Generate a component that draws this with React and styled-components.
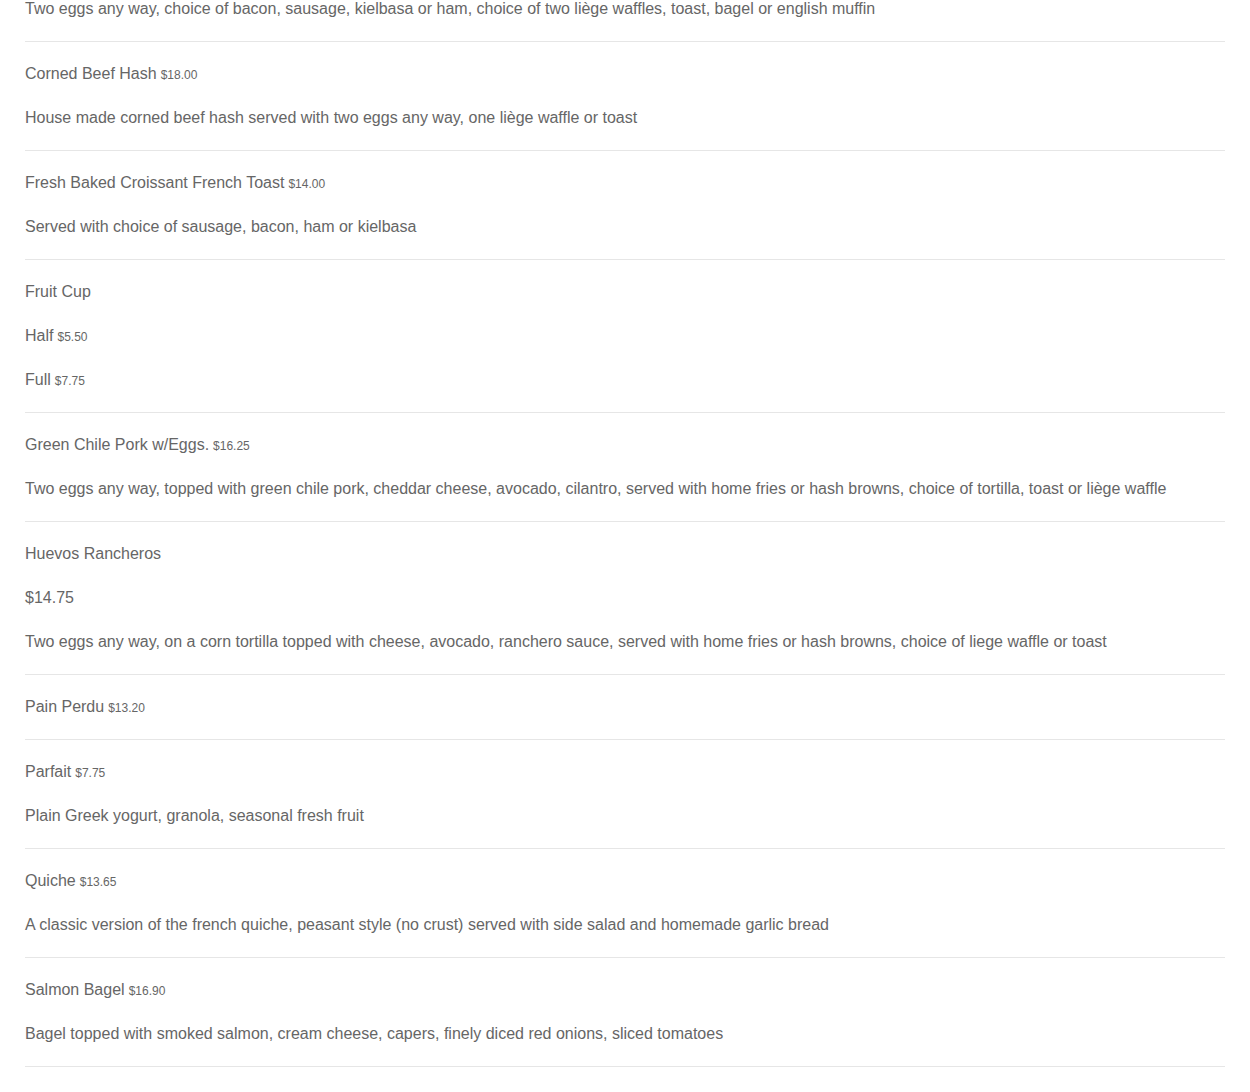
import React from "react";
import styled, { createGlobalStyle } from "styled-components";

const Global = createGlobalStyle`
  body {
    margin: 0;
    background: #fff;
    font-family: "Liberation Sans", Arial, sans-serif;
    color: #666;
  }
`;

const Menu = styled.div`
  padding: 0 25px;
  margin-top: -3px;
  overflow: hidden;
`;

const Item = styled.section`
  display: flex;
  flex-direction: column;
  gap: 20px;
  padding: ${(p) => (p.$first ? "0" : "20px")} 0 20px;
  border-bottom: 1px solid #e6e6e6;
`;

const Line = styled.p`
  margin: 0;
  font-size: 16px;
  line-height: 24px;
  height: 24px;
  white-space: nowrap;
`;

const Price = styled.span`
  font-size: 12px;
  line-height: 1;
  margin-left: 4px;
`;

const items = [
  {
    first: true,
    lines: [
      { text: "Two eggs any way, choice of bacon, sausage, kielbasa or ham, choice of two liège waffles, toast, bagel or english muffin" },
    ],
  },
  {
    lines: [
      { text: "Corned Beef Hash", price: "$18.00" },
      { text: "House made corned beef hash served with two eggs any way, one liège waffle or toast" },
    ],
  },
  {
    lines: [
      { text: "Fresh Baked Croissant French Toast", price: "$14.00" },
      { text: "Served with choice of sausage, bacon, ham or kielbasa" },
    ],
  },
  {
    lines: [
      { text: "Fruit Cup" },
      { text: "Half", price: "$5.50" },
      { text: "Full", price: "$7.75" },
    ],
  },
  {
    lines: [
      { text: "Green Chile Pork w/Eggs.", price: "$16.25" },
      { text: "Two eggs any way, topped with green chile pork, cheddar cheese, avocado, cilantro, served with home fries or hash browns, choice of tortilla, toast or liège waffle" },
    ],
  },
  {
    lines: [
      { text: "Huevos Rancheros" },
      { text: "$14.75" },
      { text: "Two eggs any way, on a corn tortilla topped with cheese, avocado, ranchero sauce, served with home fries or hash browns, choice of liege waffle or toast" },
    ],
  },
  {
    lines: [{ text: "Pain Perdu", price: "$13.20" }],
  },
  {
    lines: [
      { text: "Parfait", price: "$7.75" },
      { text: "Plain Greek yogurt, granola, seasonal fresh fruit" },
    ],
  },
  {
    lines: [
      { text: "Quiche", price: "$13.65" },
      { text: "A classic version of the french quiche, peasant style (no crust) served with side salad and homemade garlic bread" },
    ],
  },
  {
    lines: [
      { text: "Salmon Bagel", price: "$16.90" },
      { text: "Bagel topped with smoked salmon, cream cheese, capers, finely diced red onions, sliced tomatoes" },
    ],
  },
  {
    lines: [
      { text: "Smoked Salmon Benedict", price: "$17.50" },
      { text: "Two poached eggs, smoked salmon, hollandaise sauce" },
    ],
  },
];

const App = () => {
  return (
    <>
      <Global />
      <Menu>
        {items.map((item, i) => (
          <Item key={i} $first={item.first}>
            {item.lines.map((l, j) => (
              <Line key={j}>
                {l.text}
                {l.price && <Price>{l.price}</Price>}
              </Line>
            ))}
          </Item>
        ))}
      </Menu>
    </>
  );
};

export default App;
